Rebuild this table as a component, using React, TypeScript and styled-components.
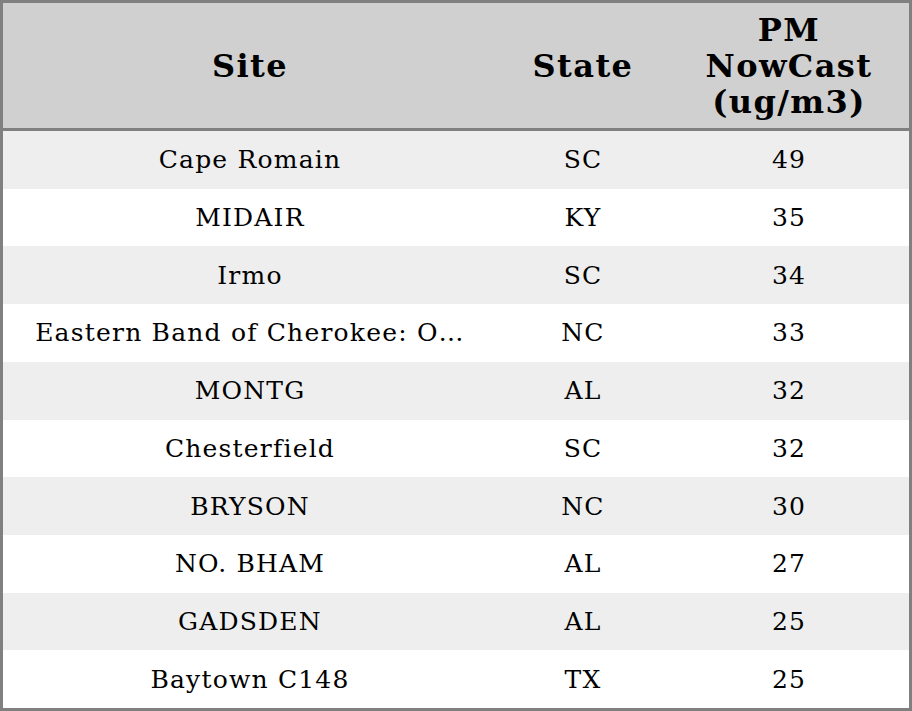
import React from "react";
import styled, { createGlobalStyle } from "styled-components";

const Global = createGlobalStyle`
  html, body { margin: 0; padding: 0; background: #ffffff; }
  body { font-family: "DejaVu Serif", serif; }
`;

const Frame = styled.div`
  width: 912px;
  height: 711px;
  box-sizing: border-box;
  border: 3px solid #808080;
  display: flex;
  flex-direction: column;
  overflow: hidden;
`;

const Grid = styled.div`
  display: grid;
  grid-template-columns: 494px 172px 1fr;
  align-items: center;
`;

const HeaderRow = styled(Grid)`
  height: 125px;
  background: #d0d0d0;
  border-bottom: 3px solid #808080;
  flex: none;
`;

const HeadCell = styled.div`
  font-family: "DejaVu Serif", serif;
  font-weight: bold;
  font-size: 32px;
  letter-spacing: 1.4px;
  line-height: 36px;
  color: #000;
  text-align: center;
`;

const Body = styled.div`
  flex: 1;
  display: grid;
  grid-template-rows: repeat(10, 1fr);
`;

const Row = styled(Grid)<{ $alt: boolean }>`
  background: ${(p) => (p.$alt ? "#eeeeee" : "#ffffff")};
`;

const Cell = styled.div`
  font-family: "DejaVu Serif", serif;
  font-size: 25px;
  letter-spacing: 1.2px;
  color: #000;
  text-align: center;
  white-space: nowrap;
  padding: 0 20px;
`;

const rows: [string, string, number][] = [
  ["Cape Romain", "SC", 49],
  ["MIDAIR", "KY", 35],
  ["Irmo", "SC", 34],
  ["Eastern Band of Cherokee: O…", "NC", 33],
  ["MONTG", "AL", 32],
  ["Chesterfield", "SC", 32],
  ["BRYSON", "NC", 30],
  ["NO. BHAM", "AL", 27],
  ["GADSDEN", "AL", 25],
  ["Baytown C148", "TX", 25],
];

export default function App() {
  return (
    <>
      <Global />
      <Frame>
        <HeaderRow>
          <HeadCell>Site</HeadCell>
          <HeadCell>State</HeadCell>
          <HeadCell>
            PM
            <br />
            NowCast
            <br />
            (ug/m3)
          </HeadCell>
        </HeaderRow>
        <Body>
          {rows.map(([site, st, v], i) => (
            <Row key={i} $alt={i % 2 === 0}>
              <Cell>{site}</Cell>
              <Cell>{st}</Cell>
              <Cell>{v}</Cell>
            </Row>
          ))}
        </Body>
      </Frame>
    </>
  );
}
